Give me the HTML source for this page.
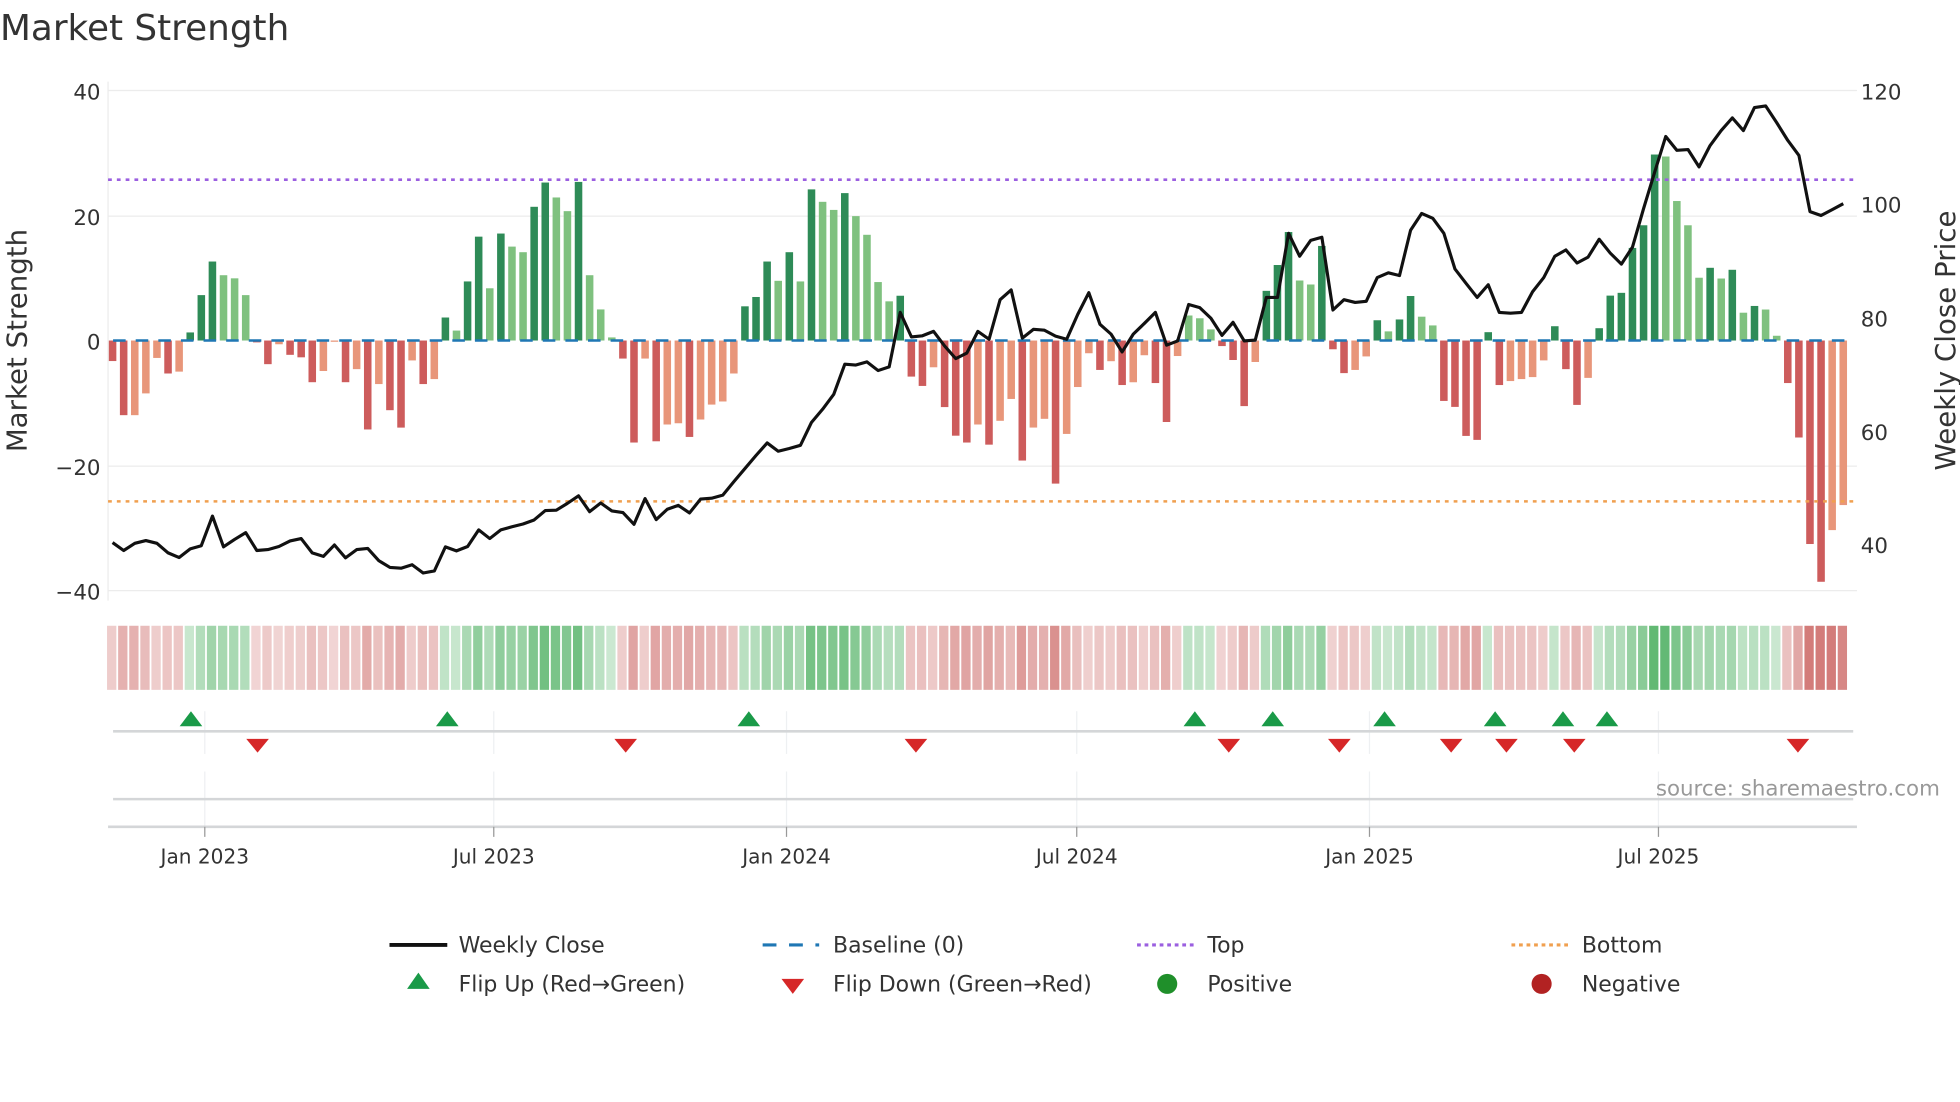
<!DOCTYPE html>
<html><head><meta charset="utf-8">
<style>
html,body{margin:0;padding:0;background:#fff;}
svg{display:block;font-family:"DejaVu Sans","Liberation Sans",sans-serif;}
</style></head>
<body>
<svg id="s" xmlns="http://www.w3.org/2000/svg" width="1960" height="1102" viewBox="0 0 1560 877" preserveAspectRatio="none">
<rect width="1560" height="877" fill="#fff"/>
<text x="0" y="32" font-size="28.5" fill="#333">Market Strength</text>
<g stroke="#ececec" stroke-width="1">
<line x1="86" y1="72" x2="1478" y2="72"/>
<line x1="86" y1="172" x2="1478" y2="172"/>
<line x1="86" y1="371" x2="1478" y2="371"/>
<line x1="86" y1="470" x2="1478" y2="470"/>
<line x1="86" y1="65" x2="86" y2="478"/>
</g>
<g font-size="17" fill="#333" text-anchor="end">
<text x="80" y="79">40</text><text x="80" y="179">20</text><text x="80" y="278">0</text>
<text x="80" y="378">−20</text><text x="80" y="477">−40</text>
</g>
<g font-size="17" fill="#333">
<text x="1481" y="79">120</text><text x="1481" y="169">100</text><text x="1481" y="260">80</text>
<text x="1481" y="350">60</text><text x="1481" y="440">40</text>
</g>
<text transform="translate(21,271) rotate(-90)" text-anchor="middle" font-size="22" fill="#333">Market Strength</text>
<text transform="translate(1556,271) rotate(-90)" text-anchor="middle" font-size="22" fill="#333">Weekly Close Price</text>
<g id="bars"></g>
<line x1="90" y1="271" x2="1475" y2="271" stroke="#1f77b4" stroke-width="2" stroke-dasharray="10,8"/>
<line x1="86" y1="143" x2="1478" y2="143" stroke="#9b5fe0" stroke-width="2" stroke-dasharray="3,4"/>
<line x1="86" y1="399" x2="1478" y2="399" stroke="#f0a050" stroke-width="2" stroke-dasharray="3,4"/>
<polyline id="price" fill="none" stroke="#111" stroke-width="2.5" stroke-linejoin="round"/>
<g id="heat"></g>
<g stroke="#eef0f2" stroke-width="1">
<line x1="163" y1="566" x2="163" y2="600"/><line x1="393" y1="566" x2="393" y2="600"/>
<line x1="626" y1="566" x2="626" y2="600"/><line x1="857" y1="566" x2="857" y2="600"/>
<line x1="1090" y1="566" x2="1090" y2="600"/><line x1="1320" y1="566" x2="1320" y2="600"/>
<line x1="163" y1="614" x2="163" y2="658"/><line x1="393" y1="614" x2="393" y2="658"/>
<line x1="626" y1="614" x2="626" y2="658"/><line x1="857" y1="614" x2="857" y2="658"/>
<line x1="1090" y1="614" x2="1090" y2="658"/><line x1="1320" y1="614" x2="1320" y2="658"/>
</g>
<line x1="90" y1="582" x2="1475" y2="582" stroke="#d4d6d8" stroke-width="2"/>
<line x1="90" y1="636" x2="1475" y2="636" stroke="#d4d6d8" stroke-width="2"/>
<line x1="86" y1="658" x2="1478" y2="658" stroke="#d4d6d8" stroke-width="2"/>
<g id="marks"></g>
<text x="1544" y="633" text-anchor="end" font-size="17" fill="#999">source: sharemaestro.com</text>
<g stroke="#999" stroke-width="1">
<line x1="163" y1="658" x2="163" y2="666"/><line x1="393" y1="658" x2="393" y2="666"/>
<line x1="626" y1="658" x2="626" y2="666"/><line x1="857" y1="658" x2="857" y2="666"/>
<line x1="1090" y1="658" x2="1090" y2="666"/><line x1="1320" y1="658" x2="1320" y2="666"/>
</g>
<g font-size="16" fill="#333" text-anchor="middle">
<text x="163" y="687">Jan 2023</text><text x="393" y="687">Jul 2023</text>
<text x="626" y="687">Jan 2024</text><text x="857" y="687">Jul 2024</text>
<text x="1090" y="687">Jan 2025</text><text x="1320" y="687">Jul 2025</text>
</g>
<g font-size="17.5" fill="#333">
<line x1="310" y1="752" x2="356" y2="752" stroke="#111" stroke-width="3"/>
<text x="365" y="758">Weekly Close</text>
<line x1="607" y1="752" x2="652" y2="752" stroke="#1f77b4" stroke-width="2.5" stroke-dasharray="11,10"/>
<text x="663" y="758">Baseline (0)</text>
<line x1="905" y1="752" x2="950" y2="752" stroke="#9b5fe0" stroke-width="2.5" stroke-dasharray="3,3"/>
<text x="961" y="758">Top</text>
<line x1="1203" y1="752" x2="1248" y2="752" stroke="#f0a050" stroke-width="2.5" stroke-dasharray="3,3"/>
<text x="1259" y="758">Bottom</text>
<polygon points="333,774 342,787 324,787" fill="#1a9a48"/>
<text x="365" y="789">Flip Up (Red→Green)</text>
<polygon points="622,779 640,779 631,791" fill="#d62728"/>
<text x="663" y="789">Flip Down (Green→Red)</text>
<circle cx="929" cy="783" r="8" fill="#1f8f2a"/>
<text x="961" y="789">Positive</text>
<circle cx="1227" cy="783" r="8" fill="#b22222"/>
<text x="1259" y="789">Negative</text>
</g>
</svg>
<script>
(function(){
var NS="http://www.w3.org/2000/svg";
function el(t,a,p){var e=document.createElementNS(NS,t);for(var k in a)e.setAttribute(k,a[k]);p.appendChild(e);return e;}
var z1=[[-3.3,'d'],[-12,'d'],[-12,'l'],[-8.5,'l'],[-2.8,'l'],[-5.3,'d'],[-5,'l'],[1.3,'D'],[7.3,'D'],[12.7,'D'],[10.5,'L'],[10,'L'],[7.3,'L'],[-0.3,'d'],[-3.8,'d'],[-0.6,'l'],[-2.3,'d'],[-2.7,'d'],[-6.7,'d'],[-4.9,'l'],[-0.2,'l'],[-6.7,'d'],[-4.6,'l'],[-14.3,'d'],[-7,'l'],[-11.2,'d'],[-14,'d'],[-3.2,'l'],[-7,'d'],[-6.2,'l'],[3.7,'D'],[1.6,'L'],[9.5,'D'],[16.7,'D'],[8.4,'L'],[17.2,'D'],[15.1,'L'],[14.2,'L'],[21.5,'D'],[25.4,'D'],[23,'L'],[20.8,'L'],[25.5,'D'],[10.5,'L'],[5,'L'],[0.5,'L'],[-2.9,'d'],[-16.4,'d'],[-2.9,'l'],[-16.2,'d'],[-13.5,'l'],[-13.3,'l'],[-15.5,'d'],[-12.7,'l'],[-10.3,'l'],[-9.8,'l'],[-5.3,'l'],[5.5,'D'],[7,'D'],[12.7,'D'],[9.6,'L'],[14.2,'D'],[9.5,'L'],[24.3,'D'],[22.3,'L'],[21,'L'],[23.7,'D'],[20,'L'],[17,'L'],[9.4,'L'],[6.3,'L'],[7.2,'D'],[-5.8,'d'],[-7.3,'d'],[-4.3,'l'],[-10.7,'d'],[-15.3,'d'],[-16.4,'d'],[-13.5,'l']];
var z2=[[1120,'d'],[1060,'l'],[1005,'l'],[1160,'d'],[1077,'l'],[1055,'l'],[1218,'d'],[1093,'l'],[975,'l'],[890,'l'],[932,'d'],[910,'l'],[970,'d'],[963,'l'],[895,'l'],[965,'d'],[1063,'d'],[897,'l'],[795,'L'],[802,'L'],[830,'L'],[872,'d'],[907,'d'],[1023,'d'],[912,'l'],[733,'D'],[668,'D'],[585,'D'],[707,'L'],[717,'L'],[620,'D'],[880,'d'],[940,'d'],[932,'l'],[898,'l'],[807,'D'],[835,'L'],[805,'D'],[746,'D'],[798,'L'],[820,'L'],[1010,'d'],[1025,'d'],[1098,'d'],[1108,'d'],[837,'D'],[970,'d'],[960,'l'],[955,'l'],[950,'l'],[908,'l'],[822,'D'],[930,'d'],[1020,'d'],[952,'l'],[827,'D'],[745,'D'],[738,'D'],[625,'D'],[568,'D'],[390,'D'],[395,'L'],[507,'L'],[568,'L'],[700,'L'],[675,'D'],[702,'L'],[680,'D'],[788,'L'],[771,'D'],[780,'L'],[846,'L'],[965,'d'],[1102,'d'],[1370,'d'],[1465,'d'],[1335,'l'],[1272,'l']];
var bars=z1.slice();z2.forEach(function(b){bars.push([(858-b[0])/15.65,b[1]]);});
var col={d:'#cd5c5c',l:'#e8967a',D:'#2e8b57',L:'#7fc17f'};
var gb=document.getElementById('bars'),gh=document.getElementById('heat');
bars.forEach(function(b,i){
 var x=89.6+8.83*i,v=b[0],h=Math.abs(v)*4.95,y=v>0?271-h:271;
 if(h>0.3)el('rect',{x:x-3,y:y,width:6,height:h,fill:col[b[1]]},gb);
 var a=0.28+Math.min(Math.abs(v),30)/30*0.6;
 var c=v>=0?'rgba(76,175,96,'+a+')':'rgba(196,80,77,'+(a*0.85)+')';
 el('rect',{x:x-4.4,y:498,width:7.4,height:51,fill:c},gh);
});
var p1=[1372,1392,1374,1367,1374,1398,1410,1388,1380,1305,1383,1364,1347,1392,1390,1382,1368,1362,1398,1407,1378,1411,1390,1387,1418,1435,1437,1428,1449,1444,1383,1393,1382,1340,1362,1340,1332,1325,1315,1291,1290,1273,1254,1294,1272,1292,1296,1326,1261,1314,1288,1278,1297,1262,1260,1252,1218,1185,1152,1120,1141,1134,1126,1068,1035,997,921,923,915,937,928,790,852,849,838,875,907,893,838];
var p2=[858,758,733,855,833,835,850,858,795,740,820,845,890,845,818,790,873,862,770,778,805,848,815,862,860,752,752,590,648,608,600,784,758,765,762,702,690,697,582,540,552,590,680,717,752,720,790,792,790,738,702,648,632,665,650,605,640,668,625,528,435,345,380,378,422,368,330,298,330,272,268,310,355,393,535,545,530,515];
var pts=[];p1.concat(p2).forEach(function(y,i){pts.push((89.6+8.83*i).toFixed(1)+','+(y*0.3147).toFixed(1));});
document.getElementById('price').setAttribute('points',pts.join(' '));
var gm=document.getElementById('marks');
[152,356,596,951,1013,1102,1190,1244,1279].forEach(function(x){el('polygon',{points:x+',566 '+(x+9)+',578 '+(x-9)+',578',fill:'#1a9a48'},gm);});
[205,498,729,978,1066,1155,1199,1253,1431].forEach(function(x){el('polygon',{points:(x-9)+',588 '+(x+9)+',588 '+x+',599',fill:'#d62728'},gm);});
})();
</script>
</body></html>
